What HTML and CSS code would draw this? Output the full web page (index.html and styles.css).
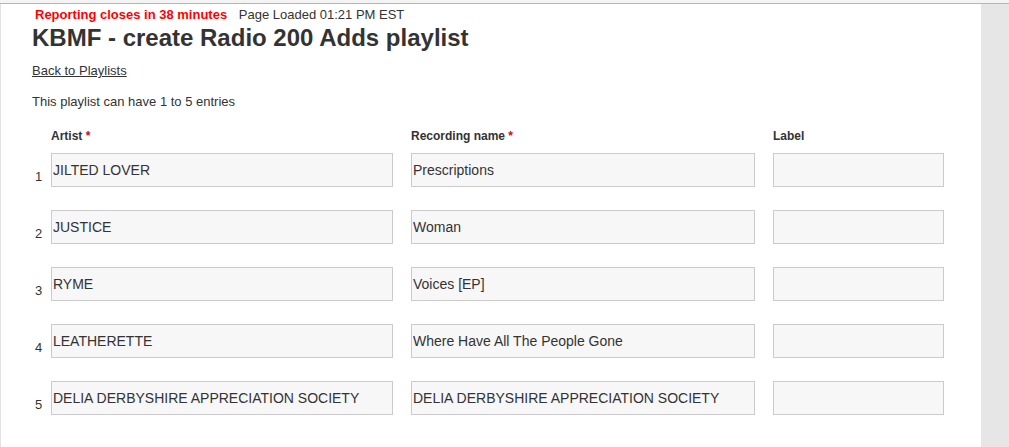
FILE: index.html
```html
<!DOCTYPE html>
<html>
<head>
<meta charset="utf-8">
<link rel="stylesheet" href="styles.css">
</head>
<body>
<div class="frame">
  <main class="page">
    <div class="status">
      <span class="deadline">Reporting closes in 38 minutes</span>
      <span class="loaded">Page Loaded 01:21 PM EST</span>
    </div>
    <h1 class="title">KBMF - create Radio 200 Adds playlist</h1>
    <a class="back" href="#">Back to Playlists</a>
    <p class="note">This playlist can have 1 to 5 entries</p>
    <div class="form">
      <div class="row head">
        <span class="num"></span>
        <span class="col artist">Artist <b class="req">*</b></span>
        <span class="col recording">Recording name <b class="req">*</b></span>
        <span class="col label">Label</span>
      </div>
      <div class="row">
        <span class="num">1</span>
        <input class="field artist" value="JILTED LOVER">
        <input class="field recording" value="Prescriptions">
        <input class="field label" value="">
      </div>
      <div class="row">
        <span class="num">2</span>
        <input class="field artist" value="JUSTICE">
        <input class="field recording" value="Woman">
        <input class="field label" value="">
      </div>
      <div class="row">
        <span class="num">3</span>
        <input class="field artist" value="RYME">
        <input class="field recording" value="Voices [EP]">
        <input class="field label" value="">
      </div>
      <div class="row">
        <span class="num">4</span>
        <input class="field artist" value="LEATHERETTE">
        <input class="field recording" value="Where Have All The People Gone">
        <input class="field label" value="">
      </div>
      <div class="row">
        <span class="num">5</span>
        <input class="field artist" value="DELIA DERBYSHIRE APPRECIATION SOCIETY">
        <input class="field recording" value="DELIA DERBYSHIRE APPRECIATION SOCIETY">
        <input class="field label" value="">
      </div>
    </div>
  </main>
  <aside class="side"></aside>
</div>
</body>
</html>
```
FILE: styles.css
```css
html, body {
  margin: 0;
  padding: 0;
  height: 100%;
  background: #f4f4f4;
}
body {
  font-family: "Liberation Sans", Arial, Helvetica, sans-serif;
  color: #333;
  padding-top: 3px;
  box-sizing: border-box;
}
.frame {
  display: flex;
  height: 100%;
  border-top: 1px solid #b5b5b5;
  background: #fff;
}
.page {
  width: 981px;
  border-left: 1px solid #e2e2e2;
  padding: 1px 0 0 31px;
  box-sizing: border-box;
}
.side {
  flex: 1;
  background: #e6e6e6;
}
.status {
  font-size: 13px;
  line-height: 16px;
  padding: 2px 0 0 3px;
}
.deadline {
  color: #f00;
  font-weight: bold;
  margin-right: 8px;
}
.title {
  font-size: 24px;
  line-height: 28px;
  font-weight: bold;
  margin: 1px 0 0;
  color: #333;
}
.back {
  display: inline-block;
  margin-top: 11px;
  font-size: 13px;
  line-height: 16px;
  color: #333;
  text-decoration: underline;
}
.note {
  font-size: 13px;
  line-height: 16px;
  margin: 15px 0 0;
}
.form {
  margin-top: 19px;
}
.row {
  display: flex;
  align-items: flex-end;
  margin-bottom: 23px;
}
.row.head {
  font-size: 12px;
  line-height: 15px;
  font-weight: bold;
  margin-bottom: 9px;
}
.req {
  color: #d0021b;
}
.num {
  width: 19px;
  padding-left: 3px;
  box-sizing: border-box;
  font-size: 13px;
  line-height: 16px;
  margin-bottom: 2px;
}
.col {
  display: block;
}
.artist { width: 342px; margin-right: 18px; }
.recording { width: 344px; margin-right: 18px; }
.label { width: 171px; }
.field {
  height: 34px;
  box-sizing: border-box;
  border: 1px solid #cbcbcb;
  background: #f7f7f7;
  font-family: "Liberation Sans", Arial, Helvetica, sans-serif;
  font-size: 14px;
  color: #333;
  padding: 0 1px;
  margin-top: 0;
  margin-bottom: 0;
  margin-left: 0;
  outline: none;
}
```
